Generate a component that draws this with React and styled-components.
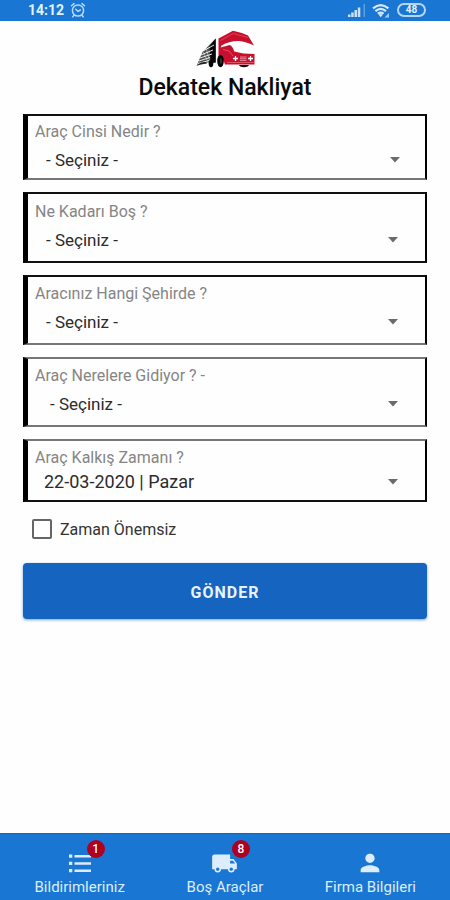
import React from "react";
import styled, { createGlobalStyle } from "styled-components";
import { MdLocalShipping, MdPerson } from "react-icons/md";

const GlobalStyle = createGlobalStyle`
  *, *::before, *::after { box-sizing: border-box; }
  body { margin: 0; background: #fff; font-family: Roboto, "Noto Sans", sans-serif; }
  button, select, input { font-family: inherit; }
`;

const Screen = styled.div`
  min-height: 100vh;
  display: flex;
  flex-direction: column;
  background: #fefefe;
`;

const StatusBar = styled.header`
  display: flex;
  align-items: center;
  justify-content: space-between;
  height: 21px;
  padding: 0 24px 1px 28px;
  background: #1976d2;
  color: #e3f2fd;
`;

const StatusGroup = styled.div`
  display: flex;
  align-items: center;
  gap: 6px;
`;

const Clock = styled.time`
  font-size: 14px;
  font-weight: 700;
  line-height: 20px;
`;

const Battery = styled.span`
  width: 29px;
  height: 14px;
  border: 2px solid #b5d6f3;
  border-radius: 7px;
  font-size: 10px;
  font-weight: 700;
  line-height: 10px;
  text-align: center;
`;

const Main = styled.main`
  flex: 1;
  padding: 9px 23px 24px;
`;

const Brand = styled.div`
  display: flex;
  flex-direction: column;
  align-items: center;
  height: 84px;
`;

const Title = styled.h1`
  margin: 5px 0 0;
  font-size: 23px;
  font-weight: 500;
  line-height: 30px;
  color: #0a0a0a;
`;

const Form = styled.form`
  display: flex;
  flex-direction: column;
`;

const Fields = styled.div`
  display: flex;
  flex-direction: column;
  gap: 12px;
`;

const Field = styled.div`
  min-height: ${(p) => p.$height}px;
  padding-top: ${(p) => p.$top}px;
  border: 2px solid #000;
  border-left-width: 5px;
  border-top-color: ${(p) => (p.$softTop ? "#777" : "#111")};
  border-bottom-color: ${(p) => (p.$softBottom ? "#777" : "#111")};
`;

const Label = styled.label`
  display: block;
  padding-left: 7px;
  font-size: 16px;
  line-height: 20px;
  color: #858585;
`;

const SelectRow = styled.div`
  display: grid;
  align-items: center;
  margin-top: ${(p) => p.$gap}px;

  & > * { grid-area: 1 / 1; }
`;

const Select = styled.select`
  appearance: none;
  width: 100%;
  height: 20px;
  padding: 0 48px 0 ${(p) => p.$indent}px;
  border: 0;
  background: transparent;
  font-size: ${(p) => p.$size}px;
  line-height: 20px;
  color: #2b2b2b;
`;

const Caret = styled.svg`
  justify-self: end;
  margin-right: ${(p) => p.$right}px;
  pointer-events: none;
`;

const CheckRow = styled.label`
  display: flex;
  align-items: center;
  gap: 8px;
  align-self: flex-start;
  height: 20px;
  margin: 17px 0 0 9px;
  font-size: 16px;
  color: #333;
`;

const Checkbox = styled.input`
  appearance: none;
  width: 20px;
  height: 20px;
  margin: 0;
  border: 2px solid #666;
  border-radius: 2px;
  background: #fff;

  &:checked { background: #1565c0; }
`;

const Submit = styled.button`
  height: 56px;
  margin-top: 24px;
  padding: 2px 0 0;
  border: 0;
  border-radius: 4px;
  background: #1565c0;
  box-shadow: 0 1px 3px rgba(21, 101, 192, 0.6);
  font-size: 16px;
  font-weight: 700;
  letter-spacing: 1px;
  color: #e8f3ff;
`;

const Nav = styled.nav`
  display: grid;
  grid-template-columns: repeat(3, 1fr);
  height: 67px;
  padding: 0 7px;
  border-top: 1px solid #1565c0;
  background: #1976d2;
`;

const NavItem = styled.a`
  display: flex;
  flex-direction: column;
  align-items: center;
  padding-top: 15px;
  color: #dcedff;
  text-decoration: none;
  font-size: 15px;
  line-height: 20px;
`;

const NavIcon = styled.span`
  position: relative;
  display: flex;
  width: 28px;
  height: 28px;
  align-items: center;
  justify-content: center;
`;

const Badge = styled.span`
  position: absolute;
  top: -9px;
  right: -11px;
  width: 18px;
  height: 18px;
  border-radius: 50%;
  background: #b00020;
  font-size: 12px;
  font-weight: 500;
  line-height: 18px;
  text-align: center;
  color: #fff;
`;

const AlarmIcon = () => (
  <svg width="16" height="16" viewBox="0 0 16 16" fill="none" stroke="#b9dafa" strokeWidth="1.5" strokeLinecap="round" aria-hidden="true">
    <circle cx="8" cy="8.5" r="5.6" />
    <path d="M1.5 3.8 4 1.6M14.5 3.8 12 1.6M5.7 7.2 8 9.4l2.4-1.4M4 13.3l-1.2 1.5M12 13.3l1.2 1.5" />
  </svg>
);

const SignalIcon = () => (
  <svg width="18" height="13" viewBox="0 0 18 13" aria-hidden="true">
    <path d="M0 10.500h2.500V13H0zM3.200 8.500h2.500V13H3.200zM6.500 6h2.500v7H6.500zM9.800 3.500h2.500V13H9.800z" fill="#cbe3fa" />
    <path d="M15.500 0H17v13h-1.500z" fill="#5c9fe1" />
  </svg>
);

const WifiIcon = () => (
  <svg width="19" height="15" viewBox="0 0 19 15" fill="none" stroke="#d5e9fc" strokeWidth="2.200" aria-hidden="true">
    <path d="M1 5.400q7.700-6.600 15.400 0M3.400 8.200q5.300-4.500 10.600 0M5.800 10.700q2.900-2.300 5.800 0" />
    <path d="M6.500 11.500l2.200 2.800 2.200-2.800q-2.200-1-4.400 0z" fill="#d5e9fc" stroke="none" />
    <path d="M17 10v4.500h-4.500z" fill="#a5cef4" stroke="none" />
  </svg>
);

const TruckLogo = () => (
  <svg width="62" height="38" viewBox="0 0 62 38" role="img" aria-label="Dekatek Nakliyat">
    <path d="M21.700 8.500v24H13L3 35l2.500-6 3-7z" fill="#4a4a4a" />
    <path d="M21.700 8.500v24l-5 .5-1-17z" fill="#080808" />
    <path d="M9 21l11-6M7 25l12-5M6 28l12-4M5 31l11-3.500M4 33.500l11-3" stroke="#fff" strokeWidth="0.900" fill="none" />
    <path d="M12 18l4 14M9 22l5 10" stroke="#eee" strokeWidth="0.500" fill="none" />
    <path d="M2 36l5-3.500 5-.5 1 1.500-6 1z" fill="#222" />
    <ellipse cx="17" cy="33.500" rx="2.300" ry="3.800" fill="#050505" />
    <path d="M24.500 8.500 39 .7Q48 2.500 54 5.500L60 15.500Q52 11.500 45 11 36 10.500 27.500 15.500l-.8 2 9-2.500q3 1 4.500 6.500Q49 24 60.500 24v10.500H31l-3-8-3.500-1z" fill="#c8102e" />
    <path d="M26.500 10.500 39 3.500l15 4" fill="none" stroke="#e24456" strokeWidth="0.900" />
    <path d="M29 19.500l6 1.500 4 5M33 32.500h27" fill="none" stroke="#e86b79" strokeWidth="0.700" />
    <path d="M39 28.500h5M41.500 26v5M54 28.500h5M56.500 26v5" stroke="#fff" strokeWidth="1.300" />
    <path d="M46 27h6.500M46 28.700h6.500M46 30.400h6.500" stroke="#ffdce0" strokeWidth="0.600" />
    <ellipse cx="26.500" cy="31" rx="3.300" ry="6.200" fill="#050505" />
    <ellipse cx="27" cy="31" rx="0.800" ry="3" fill="#444" />
    <path d="M45 35h10q-1 2.200-5 2.200T45 35z" fill="#111" />
  </svg>
);

const ListIcon = () => (
  <svg width="22" height="19" viewBox="0 0 22 19" fill="currentColor" aria-hidden="true">
    <path d="M0 .5h3.300v3.300H0zM5.500 1h16.500v2.400H5.500zM0 7.800h3.300v3.300H0zM5.500 8.300h16.500v2.400H5.500zM0 15h3.300v3.300H0zM5.500 15.500h16.500v2.400H5.500z" />
  </svg>
);

const FIELDS = [
  { id: "type", label: "Araç Cinsi Nedir ?", value: "- Seçiniz -", height: 66, top: 6, gap: 8, indent: 18, right: 25, softBottom: true },
  { id: "space", label: "Ne Kadarı Boş ?", value: "- Seçiniz -", height: 71, top: 8, gap: 8, indent: 18, right: 27 },
  { id: "city", label: "Aracınız Hangi Şehirde ?", value: "- Seçiniz -", height: 70, top: 7, gap: 8, indent: 18, right: 27, softBottom: true },
  { id: "routes", label: "Araç Nerelere Gidiyor ? -", value: "- Seçiniz -", height: 70, top: 7, gap: 8, indent: 22, right: 27, softTop: true, softBottom: true },
  { id: "date", label: "Araç Kalkış Zamanı ?", value: "22-03-2020 | Pazar", height: 63, top: 7, gap: 4, indent: 16, right: 27, size: 18, softTop: true },
];

const NAV = [
  { label: "Bildirimleriniz", icon: <ListIcon />, badge: 1 },
  { label: "Boş Araçlar", icon: <MdLocalShipping size={27} />, badge: 8 },
  { label: "Firma Bilgileri", icon: <MdPerson size={28} /> },
];

const SelectField = ({ id, label, value, height, top, gap, indent, right, size = 17, softTop, softBottom }) => (
  <Field $height={height} $top={top} $softTop={softTop} $softBottom={softBottom}>
    <Label htmlFor={id}>{label}</Label>
    <SelectRow $gap={gap}>
      <Select id={id} name={id} $indent={indent} $size={size}>
        <option>{value}</option>
      </Select>
      <Caret $right={right} width="10" height="6" viewBox="0 0 10 6" aria-hidden="true">
        <path d="M0 0h10L5 5.500z" fill="#6b6b6b" />
      </Caret>
    </SelectRow>
  </Field>
);

export default function App() {
  return (
    <>
      <GlobalStyle />
      <Screen>
        <StatusBar>
          <StatusGroup>
            <Clock>14:12</Clock>
            <AlarmIcon />
          </StatusGroup>
          <StatusGroup>
            <SignalIcon />
            <WifiIcon />
            <Battery>48</Battery>
          </StatusGroup>
        </StatusBar>
        <Main>
          <Brand>
            <TruckLogo />
            <Title>Dekatek Nakliyat</Title>
          </Brand>
          <Form onSubmit={(e) => e.preventDefault()}>
            <Fields>
              {FIELDS.map((f) => (
                <SelectField key={f.id} {...f} />
              ))}
            </Fields>
            <CheckRow>
              <Checkbox type="checkbox" name="anytime" />
              Zaman Önemsiz
            </CheckRow>
            <Submit type="submit">GÖNDER</Submit>
          </Form>
        </Main>
        <Nav>
          {NAV.map((n) => (
            <NavItem key={n.label} href="#">
              <NavIcon>
                {n.icon}
                {n.badge && <Badge>{n.badge}</Badge>}
              </NavIcon>
              {n.label}
            </NavItem>
          ))}
        </Nav>
      </Screen>
    </>
  );
}
